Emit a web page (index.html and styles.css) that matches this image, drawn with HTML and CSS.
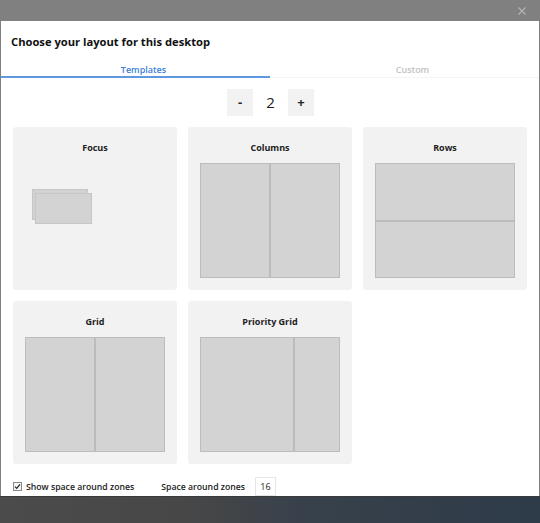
FILE: index.html
```html
<!DOCTYPE html>
<html>
<head>
<meta charset="utf-8">
<link rel="stylesheet" href="styles.css">
</head>
<body>
<div class="overlay-bar">
  <svg class="close" width="8" height="8" viewBox="0 0 8 8"><path d="M0.5 0.5L7.5 7.5M7.5 0.5L0.5 7.5" stroke="#b4b4b4" stroke-width="1.1"/></svg>
</div>
<div class="window">
  <h1 class="title">Choose your layout for this desktop</h1>
  <div class="tabs">
    <div class="tab active">Templates</div>
    <div class="tab">Custom</div>
  </div>
  <div class="counter">
    <button class="count-btn">-</button>
    <span class="count">2</span>
    <button class="count-btn">+</button>
  </div>
  <div class="cards">
    <div class="card">
      <div class="card-title">Focus</div>
      <div class="preview focus">
        <div class="fz fz1"></div>
        <div class="fz fz2"></div>
      </div>
    </div>
    <div class="card">
      <div class="card-title">Columns</div>
      <div class="preview cols">
        <div class="zone"></div><div class="zone"></div>
      </div>
    </div>
    <div class="card">
      <div class="card-title">Rows</div>
      <div class="preview rows">
        <div class="zone"></div><div class="zone"></div>
      </div>
    </div>
    <div class="card">
      <div class="card-title">Grid</div>
      <div class="preview cols">
        <div class="zone"></div><div class="zone"></div>
      </div>
    </div>
    <div class="card">
      <div class="card-title">Priority Grid</div>
      <div class="preview prio">
        <div class="zone"></div><div class="zone"></div>
      </div>
    </div>
  </div>
  <div class="footer">
    <label class="check">
      <svg class="box" width="9" height="9" viewBox="0 0 9 9"><rect x="0.5" y="0.5" width="8" height="8" fill="#f4f4f4" stroke="#8a8a8a"/><path d="M2 4.6L3.7 6.4L7 2.3" fill="none" stroke="#222" stroke-width="1.2"/></svg>
      <span>Show space around zones</span>
    </label>
    <span class="space-label">Space around zones</span>
    <span class="space-input">16</span>
  </div>
</div>
<div class="desktop"></div>
</body>
</html>
```
FILE: styles.css
```css
html, body {
  margin: 0;
  padding: 0;
}
body {
  width: 540px;
  height: 523px;
  background: #808080;
  font-family: "Open Sans", "Noto Sans", sans-serif;
  color: #1a1a1a;
  overflow: hidden;
}
.overlay-bar {
  height: 21px;
  display: flex;
  justify-content: flex-end;
  align-items: flex-start;
  padding-right: 14px;
}
.close {
  margin-top: 7px;
}
.window {
  margin: 0 1px;
  height: 475px;
  background: #ffffff;
  overflow: hidden;
}
.title {
  margin: 0;
  padding: 13px 0 0 10px;
  height: 16px;
  font-size: 11.2px;
  font-weight: 700;
  line-height: 16px;
  color: #111;
}
.tabs {
  margin-top: 14px;
  display: grid;
  grid-template-columns: 269px 1fr;
  border-bottom: 1px solid #f3f3f3;
}
.tab {
  text-align: center;
  padding-left: 16px;
  font-size: 9px;
  font-weight: 600;
  line-height: 12px;
  color: #c2c2c2;
  border-bottom: 2px solid transparent;
  margin-bottom: -1px;
}
.tab.active {
  color: #3b82d9;
  border-bottom-color: #5f98de;
}
.counter {
  margin-top: 11px;
  display: flex;
  justify-content: center;
  align-items: center;
  gap: 9px;
  padding-left: 1px;
}
.count-btn {
  width: 26px;
  height: 27px;
  border: none;
  background: #f2f2f2;
  font-family: "Open Sans", sans-serif;
  font-size: 13px;
  font-weight: 700;
  color: #222;
  padding: 0;
  line-height: 27px;
}
.count {
  width: 17px;
  text-align: center;
  font-size: 15px;
  color: #222;
  line-height: 27px;
}
.cards {
  margin-top: 11px;
  padding-left: 12px;
  display: grid;
  grid-template-columns: repeat(3, 164px);
  grid-auto-rows: 163px;
  column-gap: 11px;
  row-gap: 11px;
}
.card {
  background: #f2f2f2;
  border-radius: 3px;
  padding-top: 13px;
  display: flex;
  flex-direction: column;
  align-items: center;
}
.card-title {
  font-size: 9px;
  font-weight: 700;
  line-height: 16px;
  color: #222;
}
.preview {
  margin-top: 7px;
  width: 140px;
  height: 115px;
  display: flex;
}
.cols .zone {
  flex: 1;
}
.rows {
  flex-direction: column;
}
.rows .zone {
  flex: 1;
}
.prio .zone:first-child {
  flex: 0 0 94px;
}
.prio .zone:last-child {
  flex: 1;
}
.zone {
  box-sizing: border-box;
  background: #d3d3d3;
  border: 1px solid #bcbcbc;
}
.focus {
  position: relative;
}
.fz {
  position: absolute;
  box-sizing: border-box;
  background: #d2d2d2;
  border: 1px solid #c6c6c6;
}
.fz1 {
  left: 7px;
  top: 26px;
  width: 56px;
  height: 31px;
}
.fz2 {
  left: 10px;
  top: 30px;
  width: 57px;
  height: 31px;
  background: #d3d3d3;
}
.footer {
  margin-top: 13px;
  padding-left: 12px;
  display: flex;
  align-items: center;
  font-size: 8.7px;
  font-weight: 600;
  color: #222;
  height: 19px;
}
.check {
  display: flex;
  align-items: center;
  gap: 4px;
}
.space-label {
  margin-left: 27px;
}
.space-input {
  margin-left: 10px;
  box-sizing: border-box;
  width: 21px;
  height: 19px;
  border: 1px solid #e6e6e6;
  display: flex;
  align-items: center;
  justify-content: center;
  font-weight: 400;
  font-size: 9px;
}
.desktop {
  height: 27px;
  background: linear-gradient(90deg, #4b4b4b 0%, #474747 35%, #38414b 55%, #2e3b49 100%);
  border-top: 1px solid #3a3a3a;
  box-sizing: border-box;
}
```
